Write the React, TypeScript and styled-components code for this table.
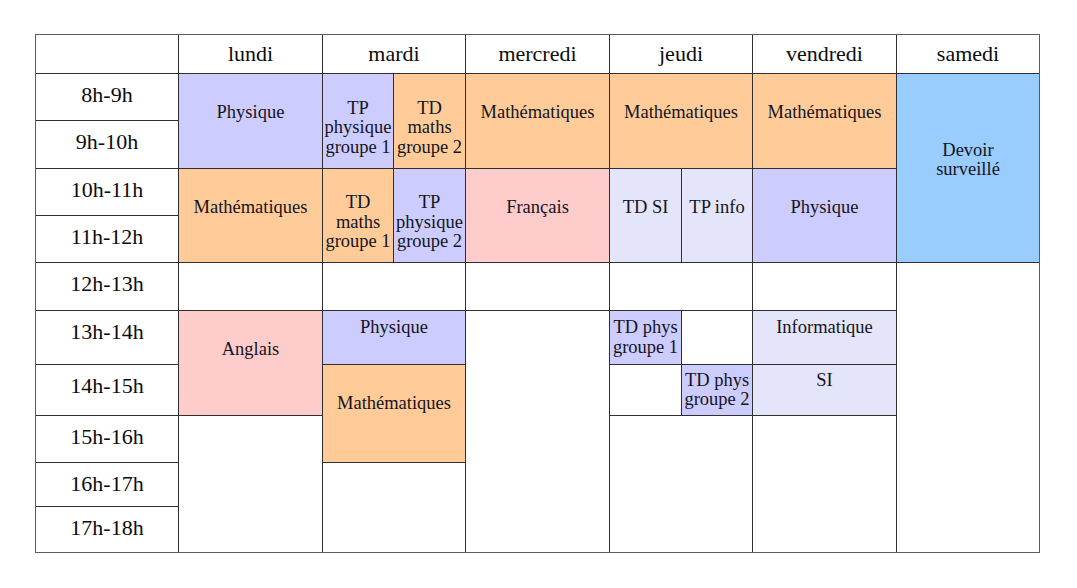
import React from 'react';
import styled, { createGlobalStyle } from 'styled-components';

type Tone = 'blue' | 'orange' | 'pink' | 'lilac' | 'sky' | 'white';

type Slot = {
    col: number,
    colSpan?: number,
    row: number,
    rowSpan?: number,
    tone?: Tone,
    lines?: string[],
    shift?: number,
}

const SERIF = '"Liberation Serif", "Times New Roman", Times, "DejaVu Serif", serif';

const tones: Record<Tone, string> = {
    blue: '#ccccff',
    orange: '#ffcc99',
    pink: '#ffcccc',
    lilac: '#e4e4fb',
    sky: '#99ccff',
    white: '#ffffff',
};

const days = [
    {label: 'lundi', col: 2, span: 1},
    {label: 'mardi', col: 3, span: 2},
    {label: 'mercredi', col: 5, span: 1},
    {label: 'jeudi', col: 6, span: 2},
    {label: 'vendredi', col: 8, span: 1},
    {label: 'samedi', col: 9, span: 1},
];

const hours = [
    '8h-9h', '9h-10h', '10h-11h', '11h-12h', '12h-13h',
    '13h-14h', '14h-15h', '15h-16h', '16h-17h', '17h-18h',
];

const MATHS = ['Mathématiques'];

const slots: Slot[] = [
    // lundi
    {col: 2, row: 2, rowSpan: 2, tone: 'blue', lines: ['Physique'], shift: -8},
    {col: 2, row: 4, rowSpan: 2, tone: 'orange', lines: MATHS, shift: -8},
    {col: 2, row: 6},
    {col: 2, row: 7, rowSpan: 2, tone: 'pink', lines: ['Anglais'], shift: -13},
    {col: 2, row: 9, rowSpan: 3},
    // mardi
    {col: 3, row: 2, rowSpan: 2, tone: 'blue', lines: ['TP', 'physique', 'groupe 1'], shift: 7},
    {col: 4, row: 2, rowSpan: 2, tone: 'orange', lines: ['TD', 'maths', 'groupe 2'], shift: 7},
    {col: 3, row: 4, rowSpan: 2, tone: 'orange', lines: ['TD', 'maths', 'groupe 1'], shift: 7},
    {col: 4, row: 4, rowSpan: 2, tone: 'blue', lines: ['TP', 'physique', 'groupe 2'], shift: 7},
    {col: 3, colSpan: 2, row: 6},
    {col: 3, colSpan: 2, row: 7, tone: 'blue', lines: ['Physique'], shift: -10},
    {col: 3, colSpan: 2, row: 8, rowSpan: 2, tone: 'orange', lines: MATHS, shift: -10},
    {col: 3, colSpan: 2, row: 10, rowSpan: 2},
    // mercredi
    {col: 5, row: 2, rowSpan: 2, tone: 'orange', lines: MATHS, shift: -8},
    {col: 5, row: 4, rowSpan: 2, tone: 'pink', lines: ['Français'], shift: -8},
    {col: 5, row: 6},
    {col: 5, row: 7, rowSpan: 5},
    // jeudi
    {col: 6, colSpan: 2, row: 2, rowSpan: 2, tone: 'orange', lines: MATHS, shift: -8},
    {col: 6, row: 4, rowSpan: 2, tone: 'lilac', lines: ['TD SI'], shift: -8},
    {col: 7, row: 4, rowSpan: 2, tone: 'lilac', lines: ['TP info'], shift: -8},
    {col: 6, colSpan: 2, row: 6},
    {col: 6, row: 7, tone: 'blue', lines: ['TD phys', 'groupe 1'], shift: 0},
    {col: 7, row: 7},
    {col: 6, row: 8},
    {col: 7, row: 8, tone: 'blue', lines: ['TD phys', 'groupe 2'], shift: 0},
    {col: 6, colSpan: 2, row: 9, rowSpan: 3},
    // vendredi
    {col: 8, row: 2, rowSpan: 2, tone: 'orange', lines: MATHS, shift: -8},
    {col: 8, row: 4, rowSpan: 2, tone: 'blue', lines: ['Physique'], shift: -8},
    {col: 8, row: 6},
    {col: 8, row: 7, tone: 'lilac', lines: ['Informatique'], shift: -10},
    {col: 8, row: 8, tone: 'lilac', lines: ['SI'], shift: -9},
    {col: 8, row: 9, rowSpan: 3},
    // samedi
    {col: 9, row: 2, rowSpan: 4, tone: 'sky', lines: ['Devoir', 'surveillé'], shift: -8},
    {col: 9, row: 6, rowSpan: 6},
];

const App: React.FC = () => {
    return (
        <>
            <GlobalStyle/>
            <Page>
                <Timetable>
                    <Corner/>
                    {days.map(day => (
                        <DayHeader key={day.label} $col={day.col} $span={day.span}>
                            {day.label}
                        </DayHeader>
                    ))}
                    {hours.map((hour, i) => (
                        <HourCell key={hour} $row={i + 2}>
                            {hour}
                        </HourCell>
                    ))}
                    {slots.map((slot, i) => (
                        <Lesson
                            key={i}
                            $col={slot.col}
                            $colSpan={slot.colSpan ?? 1}
                            $row={slot.row}
                            $rowSpan={slot.rowSpan ?? 1}
                            $tone={slot.tone ?? 'white'}
                            $shift={slot.shift ?? 0}>
                            {slot.lines && (
                                <LessonText>
                                    {slot.lines.map(line => <Line key={line}>{line}</Line>)}
                                </LessonText>
                            )}
                        </Lesson>
                    ))}
                </Timetable>
            </Page>
        </>
    );
};

export default App;

const GlobalStyle = createGlobalStyle`
  html, body {
    margin: 0;
    padding: 0;
    background: #ffffff;
  }
  body {
    font-family: ${SERIF};
    color: #111111;
  }
`;

const Page = styled.div`
  width: 1077px;
  height: 588px;
  padding: 34px 0 0 35px;
  box-sizing: border-box;
  background: #ffffff;
  font-family: ${SERIF};
`;

const Timetable = styled.div`
  display: grid;
  width: max-content;
  grid-template-columns: 142px 143px 70px 71px 143px 71px 70px 143px 142px;
  grid-template-rows: 38px 46px 47px 46px 46px 47px 53px 50px 46px 43px 45px;
  gap: 1px;
  background: #2f2f2f;
  border: 1px solid #5c5c5c;
`;

const Corner = styled.div`
  grid-column: 1;
  grid-row: 1;
  background: #ffffff;
`;

const DayHeader = styled.div<{ $col: number, $span: number }>`
  grid-column: ${p => p.$col} / span ${p => p.$span};
  grid-row: 1;
  display: flex;
  align-items: center;
  justify-content: center;
  background: #ffffff;
  font-family: ${SERIF};
  font-size: 22px;
  color: #0c0c0c;
`;

const HourCell = styled.div<{ $row: number }>`
  grid-column: 1;
  grid-row: ${p => p.$row};
  display: flex;
  justify-content: center;
  align-items: flex-start;
  padding-top: 8px;
  box-sizing: border-box;
  background: #ffffff;
  font-family: ${SERIF};
  font-size: 22px;
  line-height: 25px;
  color: #0c0c0c;
`;

const Lesson = styled.div<{ $col: number, $colSpan: number, $row: number, $rowSpan: number, $tone: Tone, $shift: number }>`
  grid-column: ${p => p.$col} / span ${p => p.$colSpan};
  grid-row: ${p => p.$row} / span ${p => p.$rowSpan};
  display: flex;
  align-items: center;
  justify-content: center;
  box-sizing: border-box;
  padding-top: ${p => Math.max(0, p.$shift * 2)}px;
  padding-bottom: ${p => Math.max(0, -p.$shift * 2)}px;
  background: ${p => tones[p.$tone]};
`;

const LessonText = styled.div`
  text-align: center;
  font-family: ${SERIF};
  font-size: 18.5px;
  line-height: 19.5px;
  color: #141420;
`;

const Line = styled.div`
  white-space: nowrap;
`;
